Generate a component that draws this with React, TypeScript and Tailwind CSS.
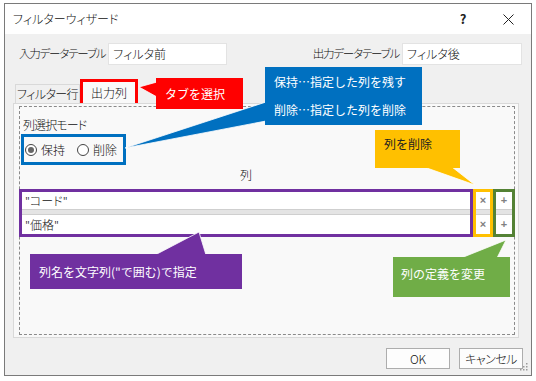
import React from 'react';

// フィルターウィザード dialog with annotation callouts

const ui = "font-['Noto_Sans_CJK_JP',sans-serif] [font-feature-settings:'palt'] font-light";
const note = "font-['Noto_Sans_CJK_JP',sans-serif] font-normal [font-feature-settings:normal]";

function Radio({ checked, label }: { checked?: boolean; label: string }) {
  return (
    <div className="flex items-center gap-[4px]">
      <span className="w-[12px] h-[12px] rounded-full border border-[#444] bg-white flex items-center justify-center">
        {checked && <span className="w-[6px] h-[6px] rounded-full bg-[#666]" />}
      </span>
      <span className="text-[12px] leading-[16px] text-[#111]">{label}</span>
    </div>
  );
}

function CellStack({ glyph }: { glyph: string }) {
  return (
    <div className="flex flex-col h-full font-['Liberation_Sans',sans-serif] font-bold">
      <div className="h-[18px] bg-white border-b border-[#cfcfcf] flex items-center justify-center text-[11px] leading-none text-[#808080]">{glyph}</div>
      <div className="h-[4px] bg-[#e4e4e4]" />
      <div className="flex-1 bg-white border-t border-[#cfcfcf] flex items-center justify-center text-[11px] leading-none text-[#808080]">{glyph}</div>
    </div>
  );
}

export default function App() {
  return (
    <div className={`relative w-[536px] h-[381px] bg-white overflow-hidden ${ui}`}>
      <div className="pt-[3px] pl-[4px]">
        <div className="w-[528px] h-[373px] border border-[#7a7a7a] flex flex-col bg-[#f0f0f0]">
          {/* title bar */}
          <div className="h-[30px] bg-white flex items-center pl-[8px]">
            <span className="text-[12px] leading-[16px] text-[#111] whitespace-nowrap">フィルターウィザード</span>
            <div className="ml-auto flex items-center h-full">
              <span className="w-[46px] text-center text-[13px] font-semibold text-[#222]">?</span>
              <span className="w-[45px] flex items-center justify-center">
                <svg width="11" height="11" viewBox="0 0 11 11">
                  <path d="M0.5 0.5 L10.5 10.5 M10.5 0.5 L0.5 10.5" stroke="#222" strokeWidth="1" />
                </svg>
              </span>
            </div>
          </div>

          {/* body */}
          <div className="flex-1 flex flex-col">
            <div className="mt-[9px] h-[22px] flex items-center pl-[14px] pr-[9px]">
              <span className="text-[11.5px] tracking-[-1.2px] text-[#111] whitespace-nowrap">入力データテーブル</span>
              <div className="ml-[3px] w-[119px] h-[22px] bg-white border border-[#e3e3e3] flex items-center pl-[4px] text-[12px] text-[#111]">フィルタ前</div>
              <span className="ml-auto text-[11.5px] tracking-[-1.2px] text-[#111] whitespace-nowrap">出力データテーブル</span>
              <div className="ml-[3px] w-[120px] h-[22px] bg-white border border-[#e3e3e3] flex items-center pl-[4px] text-[12px] text-[#111]">フィルタ後</div>
            </div>

            {/* tabs */}
            <div className="mt-[14px] h-[24px] flex items-end pl-[10px]">
              <div className="h-[19px] w-[65px] border border-b-0 border-[#d9d9d9] bg-[#f0f0f0] flex items-center justify-center text-[12px] tracking-[-0.6px] text-[#111] whitespace-nowrap">フィルター行</div>
              <div className="h-[25px] w-[58px] border-[3px] border-b-0 border-[#ff0000] bg-[#fafafa] flex items-center justify-center text-[12px] text-[#111] -mb-px whitespace-nowrap">出力列</div>
            </div>

            {/* panel */}
            <div className="ml-[8px] w-[506px] h-[235px] border border-[#d9d9d9] bg-[#f9f9f9] pt-[2px] pl-[5px] pr-[3px] pb-[2px] flex">
              <div className="flex-1 border border-dashed border-[#8a8a8a] flex flex-col">
                <div className="mt-[10px] pl-[3px] text-[12px] leading-[16px] tracking-[-0.9px] text-[#111] whitespace-nowrap">列選択モード</div>
                <div className="mt-px ml-px w-[105px] h-[31px] border-[3px] border-[#0070c0] flex items-center gap-[12px] pl-px">
                  <Radio checked label="保持" />
                  <Radio label="削除" />
                </div>
                <div className="mt-[2px] flex">
                  <div className="flex-1 text-center text-[12px] leading-[16px] text-[#111]">列</div>
                  <div className="w-[42px]" />
                </div>
                <div className="mt-[6px] -mx-px h-[48px] flex">
                  <div className="w-[454px] border-[3px] border-[#7030a0] flex flex-col">
                    <div className="h-[18px] bg-white border-b border-[#cfcfcf] flex items-center pl-[3px] text-[12px] text-[#111]">"コード"</div>
                    <div className="h-[4px] bg-[#e4e4e4]" />
                    <div className="flex-1 bg-white border-t border-[#cfcfcf] flex items-center pl-[3px] text-[12px] text-[#111]">"価格"</div>
                  </div>
                  <div className="w-[20px] border-[3px] border-[#ffc000]">
                    <CellStack glyph="×" />
                  </div>
                  <div className="w-[22px] border-[3px] border-[#548235]">
                    <CellStack glyph="+" />
                  </div>
                </div>
              </div>
            </div>

            {/* buttons */}
            <div className="mt-[10px] h-[21px] flex justify-end gap-[9px] pr-[8px]">
              <button className="w-[64px] h-[21px] bg-[#fdfdfd] border border-[#adadad] text-[12px] text-[#111]">OK</button>
              <button className="w-[64px] h-[21px] bg-[#fdfdfd] border border-[#adadad] text-[12px] tracking-[-0.5px] text-[#111]">キャンセル</button>
            </div>
          </div>
        </div>
      </div>

      {/* resize grip */}
      <svg className="absolute left-[519px] top-[362px]" width="9" height="9" viewBox="0 0 9 9">
        {[[7, 1], [7, 4], [4, 4], [7, 7], [4, 7], [1, 7]].map(([x, y], i) => (
          <rect key={i} x={x} y={y} width="1.5" height="1.5" fill="#9a9a9a" />
        ))}
      </svg>

      {/* callout pointers */}
      <svg className="absolute left-0 top-0 pointer-events-none" width="536" height="381">
        <polygon points="157,82 157,97 139,87" fill="#ff0000" stroke="#fff" strokeWidth="0.8" />
        <polygon points="266,102 266,121 125,148" fill="#0070c0" stroke="#fff" strokeWidth="0.8" />
        <polygon points="424,167 452,167 475,185" fill="#ffc000" stroke="#fff" strokeWidth="0.8" />
        <polygon points="155,255 206,255 199,232" fill="#7030a0" stroke="#fff" strokeWidth="0.8" />
        <polygon points="461,258 497,258 506,240" fill="#70ad47" stroke="#fff" strokeWidth="0.8" />
      </svg>

      {/* callouts */}
      <div className={`absolute left-[156px] top-[78px] w-[87px] h-[31px] bg-[#ff0000] flex items-center pl-[9px] text-[12px] text-white ${note}`}>タブを選択</div>
      <div className={`absolute left-[265px] top-[67px] w-[157px] h-[58px] bg-[#0070c0] flex flex-col justify-center gap-[14px] pl-[9px] text-[12px] leading-[14px] text-white ${note}`}>
        <span>保持…指定した列を残す</span>
        <span>削除…指定した列を削除</span>
      </div>
      <div className={`absolute left-[375px] top-[130px] w-[85px] h-[38px] bg-[#ffc000] pl-[9px] pt-[6px] text-[12px] leading-[16px] text-[#222] ${note}`}>列を削除</div>
      <div className={`absolute left-[30px] top-[254px] w-[212px] h-[35px] bg-[#7030a0] flex items-center pl-[9px] text-[12px] text-white ${note}`}>列名を文字列("で囲む)で指定</div>
      <div className={`absolute left-[393px] top-[257px] w-[117px] h-[40px] bg-[#70ad47] pl-[8px] pt-[9px] text-[12px] leading-[16px] text-white ${note}`}>列の定義を変更</div>
    </div>
  );
}
